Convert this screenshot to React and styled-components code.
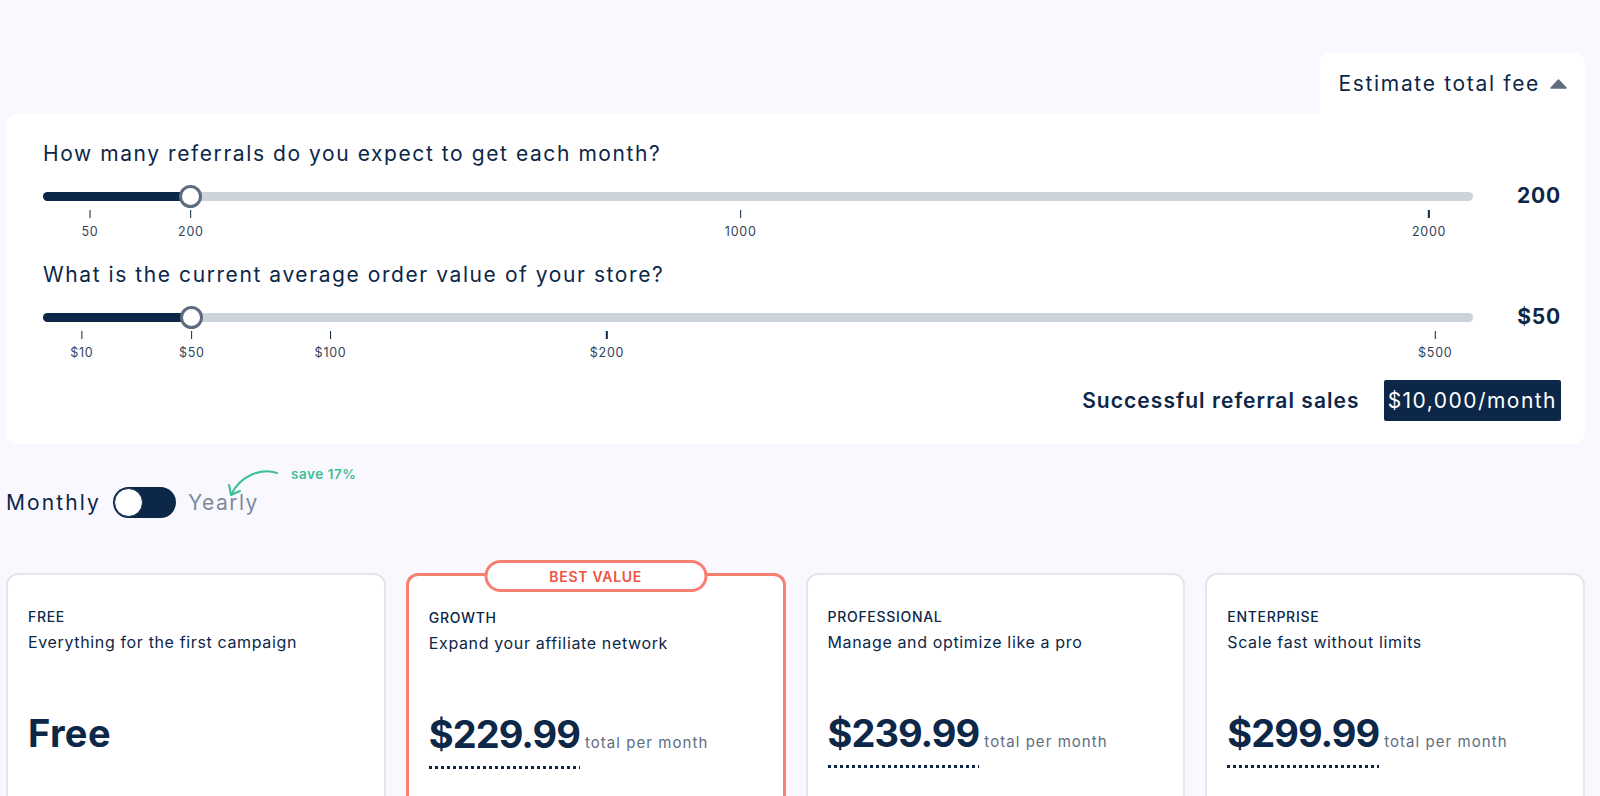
import React from 'react';
import styled, { createGlobalStyle } from 'styled-components';

const navy = '#0c2748';
const coral = '#f67f70';

const GlobalStyle = createGlobalStyle`
  body {
    margin: 0;
    background: #f8f8fe;
    font-family: Inter, "Noto Sans", sans-serif;
    color: ${navy};
    letter-spacing: 0.08em;
  }
  * { box-sizing: border-box; }
`;

const Page = styled.div`
  width: 1585px;
  padding: 53px 0 40px 6px;
`;

const TabRow = styled.div`
  display: flex;
  justify-content: flex-end;
`;

const Tab = styled.button`
  display: flex;
  align-items: center;
  gap: 10px;
  height: 61px;
  padding: 0 18px 0 18px;
  background: #fff;
  border: 0;
  border-radius: 9px 9px 0 0;
  font: inherit;
  font-size: 21px;
  letter-spacing: 0.08em;
  color: ${navy};
  cursor: pointer;
`;

const Panel = styled.section`
  background: #fff;
  border-radius: 10px 0 10px 10px;
  padding: 25px 24px 23px 37px;
`;

const Question = styled.div`
  font-size: 21px;
  line-height: 29px;
  letter-spacing: 0.075em;
  margin-top: ${(p) => (p.$first ? 0 : 11)}px;
`;

const SliderRow = styled.div`
  display: grid;
  grid-template-columns: 1fr 88px;
  margin-top: 15px;
`;

const TrackBox = styled.div`
  position: relative;
  height: 26px;
  display: flex;
  align-items: center;
`;

const Rail = styled.div`
  width: 100%;
  height: 9px;
  border-radius: 5px;
  background: #ccd3db;
`;

const Fill = styled.div`
  height: 100%;
  border-radius: 5px;
  background: ${navy};
`;

const Thumb = styled.div`
  position: absolute;
  top: 50%;
  width: 23px;
  height: 23px;
  margin: -11.5px 0 0 -11.5px;
  border-radius: 50%;
  background: #fff;
  border: 3px solid #5c6b7e;
`;

const Ticks = styled.div`
  position: relative;
  height: 40px;
`;

const Tick = styled.div`
  position: absolute;
  top: 1px;
  transform: translateX(-50%);
  display: flex;
  flex-direction: column;
  align-items: center;
  font-size: 12.5px;
  line-height: 14px;
  letter-spacing: 0.06em;
  color: #33435a;

  &::before {
    content: '';
    width: 1.5px;
    height: 8px;
    margin-bottom: 7px;
    background: ${navy};
  }
`;

const Value = styled.div`
  font-size: 21px;
  font-weight: 700;
  line-height: 26px;
  letter-spacing: 0.04em;
  text-align: right;
`;

const SalesRow = styled.div`
  display: flex;
  justify-content: flex-end;
  align-items: center;
  gap: 24px;
  margin-top: 10px;
`;

const SalesLabel = styled.span`
  font-size: 21px;
  font-weight: 600;
  letter-spacing: 0.05em;
`;

const SalesBox = styled.span`
  display: flex;
  align-items: center;
  height: 41px;
  padding: 0 4px;
  border-radius: 2px;
  background: ${navy};
  color: #fff;
  font-size: 21px;
  letter-spacing: 0.07em;
`;

const BillingRow = styled.div`
  display: flex;
  align-items: center;
  gap: 12px;
  height: 31px;
  margin-top: 43px;
  font-size: 21px;
  letter-spacing: 0.1em;
`;

const Switch = styled.button`
  position: relative;
  width: 63px;
  height: 31px;
  border: 0;
  border-radius: 16px;
  background: ${navy};
  padding: 0;
  cursor: pointer;
`;

const Knob = styled.span`
  position: absolute;
  top: 1px;
  left: 1px;
  width: 29px;
  height: 29px;
  border-radius: 50%;
  background: #fff;
  border: 1.5px solid ${navy};
`;

const Yearly = styled.span`
  position: relative;
  color: #7f8c9d;
  letter-spacing: 0.07em;
`;

const SaveArrow = styled.svg`
  position: absolute;
  left: 38px;
  top: -26px;
  overflow: visible;
`;

const SaveNote = styled.span`
  position: absolute;
  left: 103px;
  top: -23px;
  white-space: nowrap;
  font-size: 13.5px;
  line-height: 14px;
  font-weight: 600;
  letter-spacing: 0.04em;
  color: #3dbf95;
`;

const Cards = styled.div`
  display: grid;
  grid-template-columns: repeat(4, 1fr);
  gap: 20px;
  margin-top: 55px;
`;

const Card = styled.article`
  position: relative;
  min-height: 300px;
  padding: 32px 20px;
  background: #fff;
  border: ${(p) => (p.$featured ? `3px solid ${coral}` : '2px solid #e4e6ed')};
  border-radius: 12px;
`;

const Badge = styled.div`
  position: absolute;
  top: -16px;
  left: 50%;
  transform: translateX(-50%);
  width: 223px;
  height: 32px;
  display: flex;
  align-items: center;
  justify-content: center;
  background: #fff;
  border: 3px solid ${coral};
  border-radius: 16px;
  font-size: 14px;
  font-weight: 600;
  letter-spacing: 0.05em;
  color: #f0533f;
`;

const Tier = styled.div`
  font-size: 14px;
  font-weight: 500;
  line-height: 20px;
  letter-spacing: 0.05em;
  text-transform: uppercase;
`;

const Tagline = styled.div`
  margin-top: 3px;
  font-size: 16px;
  line-height: 24px;
  letter-spacing: 0.04em;
`;

const PriceRow = styled.div`
  display: flex;
  align-items: baseline;
  gap: 5px;
  margin-top: 56px;
`;

const Price = styled.span`
  font-size: 38px;
  font-weight: 700;
  line-height: 46px;
  letter-spacing: ${(p) => (p.$dotted ? '-0.025em' : '0.01em')};
  padding-bottom: ${(p) => (p.$dotted ? 12 : 0)}px;
  background-image: ${(p) =>
    p.$dotted ? `linear-gradient(to right, ${navy} 50%, transparent 50%)` : 'none'};
  background-size: 6px 3px;
  background-repeat: repeat-x;
  background-position: left bottom;
`;

const Per = styled.span`
  font-size: 15px;
  color: #5f6d80;
  letter-spacing: 0.07em;
`;

const sliders = [
  {
    question: 'How many referrals do you expect to get each month?',
    value: '200',
    at: 10.34,
    ticks: [
      ['50', 3.28],
      ['200', 10.34],
      ['1000', 48.79],
      ['2000', 96.93],
    ],
  },
  {
    question: 'What is the current average order value of your store?',
    value: '$50',
    at: 10.41,
    ticks: [
      ['$10', 2.71],
      ['$50', 10.41],
      ['$100', 20.11],
      ['$200', 39.44],
      ['$500', 97.36],
    ],
  },
];

const plans = [
  { tier: 'Free', tagline: 'Everything for the first campaign', price: 'Free' },
  { tier: 'Growth', tagline: 'Expand your affiliate network', price: '$229.99', featured: true },
  { tier: 'Professional', tagline: 'Manage and optimize like a pro', price: '$239.99' },
  { tier: 'Enterprise', tagline: 'Scale fast without limits', price: '$299.99' },
];

function Slider({ question, value, at, ticks, first }) {
  return (
    <>
      <Question $first={first}>{question}</Question>
      <SliderRow>
        <div>
          <TrackBox>
            <Rail>
              <Fill style={{ width: `${at}%` }} />
            </Rail>
            <Thumb style={{ left: `${at}%` }} />
          </TrackBox>
          <Ticks>
            {ticks.map(([label, pos]) => (
              <Tick key={label} style={{ left: `${pos}%` }}>
                {label}
              </Tick>
            ))}
          </Ticks>
        </div>
        <Value>{value}</Value>
      </SliderRow>
    </>
  );
}

export default function App() {
  return (
    <Page>
      <GlobalStyle />
      <TabRow>
        <Tab>
          Estimate total fee
          <svg width="17" height="10" viewBox="0 0 17 10">
            <path d="M8.5 1 L16 9 H1 Z" fill="#5f6d80" stroke="#5f6d80" strokeWidth="1.5" strokeLinejoin="round" />
          </svg>
        </Tab>
      </TabRow>
      <Panel>
        {sliders.map((s, i) => (
          <Slider key={s.question} {...s} first={i === 0} />
        ))}
        <SalesRow>
          <SalesLabel>Successful referral sales</SalesLabel>
          <SalesBox>$10,000/month</SalesBox>
        </SalesRow>
      </Panel>

      <BillingRow>
        <span>Monthly</span>
        <Switch aria-label="Toggle yearly billing">
          <Knob />
        </Switch>
        <Yearly>
          Yearly
          <SaveArrow width="56" height="36" viewBox="0 0 56 36">
            <path
              d="M51 9 C 37 4, 15 10, 5 31 M5 31 L3 21 M5 31 L14 27"
              fill="none"
              stroke="#3dbf95"
              strokeWidth="2"
              strokeLinecap="round"
              strokeLinejoin="round"
            />
          </SaveArrow>
          <SaveNote>save 17%</SaveNote>
        </Yearly>
      </BillingRow>

      <Cards>
        {plans.map((p) => (
          <Card key={p.tier} $featured={p.featured}>
            {p.featured && <Badge>BEST VALUE</Badge>}
            <Tier>{p.tier}</Tier>
            <Tagline>{p.tagline}</Tagline>
            <PriceRow>
              <Price $dotted={p.price !== 'Free'}>{p.price}</Price>
              {p.price !== 'Free' && <Per>total per month</Per>}
            </PriceRow>
          </Card>
        ))}
      </Cards>
    </Page>
  );
}
